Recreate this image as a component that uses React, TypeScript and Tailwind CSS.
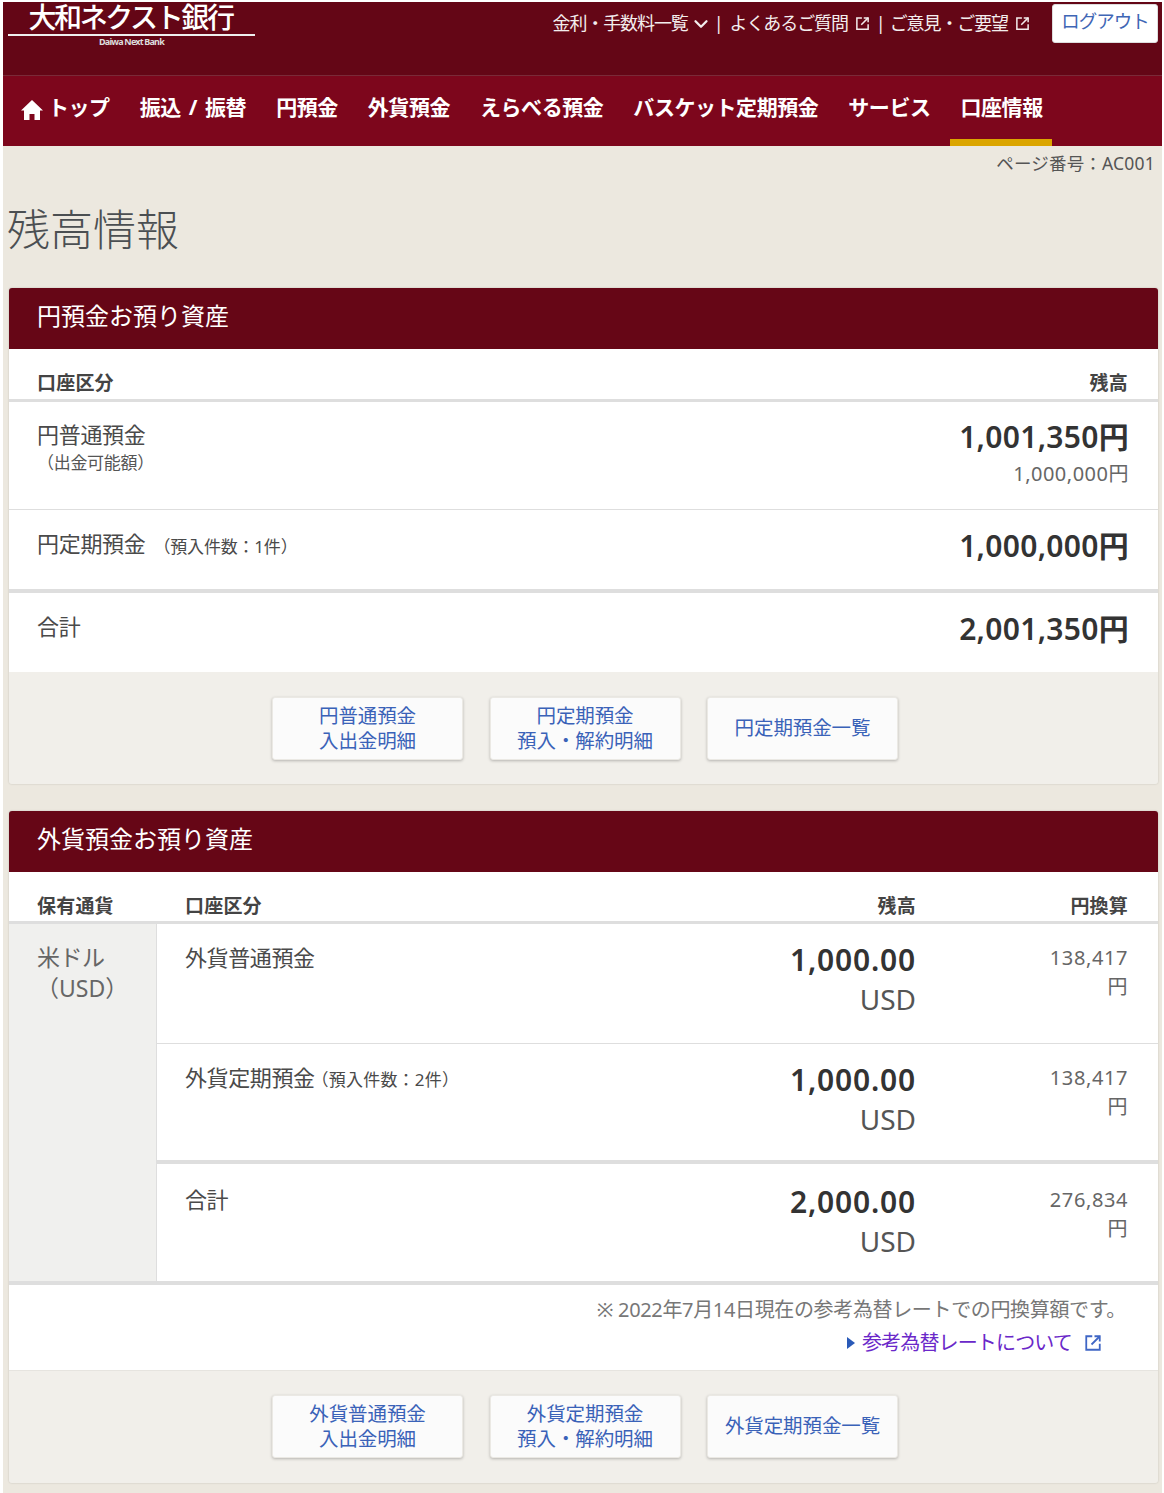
import { type ReactNode } from 'react';
import { ChevronDown } from 'lucide-react';

const navItems = ['円預金', '外貨預金', 'えらべる預金', 'バスケット定期預金', 'サービス'];

const LinkOutIcon = ({ className }: { className: string }) => (
  <svg viewBox="0 0 24 24" fill="none" stroke="currentColor" strokeWidth="2.4" className={className}>
    <path d="M11 3H3v18h18v-8" />
    <path d="M10 14 21 3" />
    <path d="M14 3h7v7" />
  </svg>
);

const HomeIcon = () => (
  <svg viewBox="0 0 22 20" fill="white" className="w-[22px] h-[20px] mt-[6px]">
    <path d="M11 0 22 10.5h-3V20h-5.5v-6h-5v6H3v-9.5H0z" />
  </svg>
);

const SectionHeader = ({ title }: { title: string }) => (
  <div className="h-[61px] bg-[#660616] rounded-t-[3px] pl-[28px] pb-[6px] flex items-center text-white text-[24px]">
    {title}
  </div>
);

const ActionButton = ({ lines }: { lines: string[] }) => (
  <div className="w-[191px] h-[63px] bg-[#fbfbfb] rounded-[3px] border border-[#ebe9e4] shadow-[0_1px_3px_rgba(0,0,0,0.25)] pb-[2px] flex flex-col items-center justify-center text-[#3a62b8] text-[19.5px] leading-[25px] tracking-[-0.1px]">
    {lines.map((line) => (
      <span key={line}>{line}</span>
    ))}
  </div>
);

const ButtonBar = ({ buttons, className }: { buttons: string[][]; className: string }) => (
  <div className={`bg-[#f1efea] rounded-b-[3px] flex justify-center gap-[26.5px] pl-[3px] ${className}`}>
    {buttons.map((lines) => (
      <ActionButton key={lines.join()} lines={lines} />
    ))}
  </div>
);

const YenRow = ({ label, note, amount, sub, className, children }: { label: string; note?: string; amount: string; sub?: string; className: string; children?: ReactNode }) => (
  <div className={`flex justify-between pl-[28px] pr-[30px] ${className}`}>
    <div className="text-[22px] leading-[30px] text-[#4a4a4a] tracking-[-0.3px]">
      {label}
      {note && <span className="text-[17px] ml-[8px] tracking-[-0.2px] relative top-[1px]">{note}</span>}
      {children}
    </div>
    <div className="text-right">
      <div className="text-[30px] leading-[36px] font-semibold text-[#333] tracking-[0.3px] mr-[-1px]">{amount}</div>
      {sub && <div className="text-[20px] leading-[28px] mt-[5px] text-[#666] tracking-[0.5px] mr-[-1px]">{sub}</div>}
    </div>
  </div>
);

const FxRow = ({ label, note, amount, yen, className }: { label: string; note?: string; amount: string; yen: string; className: string }) => (
  <div className={`grid grid-cols-[1fr_210px_212px] pl-[28px] pr-[30px] ${className}`}>
    <div className="text-[22px] leading-[30px] text-[#4a4a4a] tracking-[-0.4px]">
      {label}
      {note && <span className="text-[17px] ml-[-3px] tracking-[0.2px]">{note}</span>}
    </div>
    <div className="text-right">
      <div className="text-[30px] leading-[36px] font-semibold text-[#333] tracking-[0.8px]">{amount}</div>
      <div className="text-[28px] leading-[36px] mt-[3px] text-[#555]">USD</div>
    </div>
    <div className="text-right text-[20px] leading-[29px] mt-[1px] text-[#666] tracking-[0.6px]">
      {yen}
      <br />円
    </div>
  </div>
);

export default function App() {
  return (
    <div className="w-[1164px] h-[1493px] bg-white pt-[2px] pl-[3px] pr-[2px] font-['Noto_Sans','Noto_Sans_CJK_JP',sans-serif] overflow-hidden">
      <div className="h-[1491px] bg-[#ece8df]">
        <header>
          <div className="h-[74px] bg-[#640616] border-b border-[#7a2a38] flex justify-between items-start">
            <div className="w-[247px] ml-[5px] flex flex-col items-center">
              <div className="h-[34px] w-full border-b-2 border-[#eee] pt-[1px] text-white text-[28px] leading-[29px] font-medium text-center tracking-[-2.4px] pr-[2px] whitespace-nowrap">
                大和ネクスト銀行
              </div>
              <div className="text-[9px] leading-[12px] font-bold text-[#ddd] tracking-[-0.8px]">Daiwa Next Bank</div>
            </div>
            <div className="flex items-center text-[#f3eded] text-[18px] tracking-[-1.1px] mt-[2px] mr-[4px]">
              <span>金利・手数料一覧</span>
              <ChevronDown className="w-[22px] h-[22px] ml-[2px]" strokeWidth={2.5} />
              <span className="ml-[2px] mr-[7px]">|</span>
              <span>よくあるご質問</span>
              <LinkOutIcon className="w-[15px] h-[15px] ml-[7px]" />
              <span className="ml-[6px] mr-[5px]">|</span>
              <span>ご意見・ご要望</span>
              <LinkOutIcon className="w-[15px] h-[15px] ml-[7px]" />
              <div className="w-[106px] h-[39px] ml-[22px] bg-white rounded-[3px] border border-[#ddd] text-[#3f66b5] text-[18.5px] leading-[32px] text-center tracking-[-1px]">
                ログアウト
              </div>
            </div>
          </div>
          <nav className="h-[70px] bg-[#7d061c] flex items-start pl-[18px] pt-[16px] text-white text-[21px] font-bold leading-[30px] tracking-[-0.45px] gap-[30px]">
            <span className="flex items-center gap-[6px]">
              <HomeIcon />
              <span className="-ml-[1px]">トップ</span>
            </span>
            <span className="[word-spacing:3px]">振込 / 振替</span>
            {navItems.map((item) => (
              <span key={item}>{item}</span>
            ))}
            <span className="relative">
              口座情報
              <span className="absolute left-[-10px] right-[-9px] top-[47px] h-[7px] bg-[#dba500]" />
            </span>
          </nav>
        </header>

        <div className="text-right pr-[7px] pt-[4px] text-[17.5px] leading-[26px] text-[#555] tracking-[0.2px]">ページ番号：AC001</div>
        <h1 className="pl-[4px] mt-[23px] text-[43px] leading-[62px] font-light text-[#4b4f52]">残高情報</h1>

        <main className="pl-[6px] pr-[4px] mt-[27px]">
          <section className="shadow-[0_0_2px_rgba(0,0,0,0.2)] rounded-[3px]">
            <SectionHeader title="円預金お預り資産" />
            <div className="bg-white">
              <div className="h-[53px] border-b-[3px] border-[#dedede] flex justify-between items-end pl-[28px] pr-[30px] pb-[1px] text-[19px] leading-[30px] font-bold text-[#444] tracking-[0.2px]">
                <span>口座区分</span>
                <span>残高</span>
              </div>
              <YenRow label="円普通預金" amount="1,001,350円" sub="1,000,000円" className="h-[108px] border-b border-[#dedede] pt-[17px]">
                <div className="text-[17px] leading-[24px] mt-[2px] text-[#555] tracking-[-0.3px]">（出金可能額）</div>
              </YenRow>
              <YenRow label="円定期預金" note="（預入件数：1件）" amount="1,000,000円" className="h-[83px] border-b-[4px] border-[#dedede] pt-[18px]" />
              <YenRow label="合計" amount="2,001,350円" className="h-[79px] pt-[18px]" />
            </div>
            <ButtonBar
              className="h-[112px] pt-[25px]"
              buttons={[['円普通預金', '入出金明細'], ['円定期預金', '預入・解約明細'], ['円定期預金一覧']]}
            />
          </section>

          <section className="mt-[27px] shadow-[0_0_2px_rgba(0,0,0,0.2)] rounded-[3px]">
            <SectionHeader title="外貨預金お預り資産" />
            <div className="bg-white">
              <div className="h-[52px] border-b-[3px] border-[#dedede] grid grid-cols-[148px_1fr_210px_212px] items-end pl-[28px] pr-[30px] text-[19px] leading-[30px] font-bold text-[#444] tracking-[0.2px]">
                <span>保有通貨</span>
                <span>口座区分</span>
                <span className="text-right">残高</span>
                <span className="text-right">円換算</span>
              </div>
              <div className="flex border-b-[4px] border-[#dedede]">
                <div className="w-[148px] shrink-0 bg-[#f0f0ee] border-r border-[#dedede] pl-[28px] pt-[18px] text-[23px] leading-[31px] text-[#666] tracking-[-0.5px]">
                  米ドル
                  <br />
                  <span className="ml-[-1px] tracking-[0px]">（USD）</span>
                </div>
                <div className="flex-1 min-w-0">
                  <FxRow label="外貨普通預金" amount="1,000.00" yen="138,417" className="h-[120px] border-b border-[#dedede] pt-[18px]" />
                  <FxRow label="外貨定期預金" note="（預入件数：2件）" amount="1,000.00" yen="138,417" className="h-[120px] border-b-[4px] border-[#dedede] pt-[18px]" />
                  <FxRow label="合計" amount="2,000.00" yen="276,834" className="h-[117px] pt-[20px]" />
                </div>
              </div>
              <div className="h-[86px] border-b border-[#e6e4df] flex flex-col items-end pr-[32px] pt-[10px]">
                <div className="text-[20px] leading-[30px] text-[#777] tracking-[-0.35px]">※ 2022年7月14日現在の参考為替レートでの円換算額です。</div>
                <div className="flex items-center text-[20px] leading-[32px] mt-[2px] text-[#6a28c9] tracking-[-0.85px] pr-[24px]">
                  <span className="mr-[7px] w-0 h-0 border-y-[6px] border-y-transparent border-l-[8px] border-l-[#2a5ab8]" />
                  参考為替レートについて
                  <LinkOutIcon className="w-[18px] h-[18px] ml-[12px] text-[#3f66c5]" />
                </div>
              </div>
            </div>
            <ButtonBar
              className="h-[112px] pt-[24px]"
              buttons={[['外貨普通預金', '入出金明細'], ['外貨定期預金', '預入・解約明細'], ['外貨定期預金一覧']]}
            />
          </section>
        </main>
      </div>
    </div>
  );
}
